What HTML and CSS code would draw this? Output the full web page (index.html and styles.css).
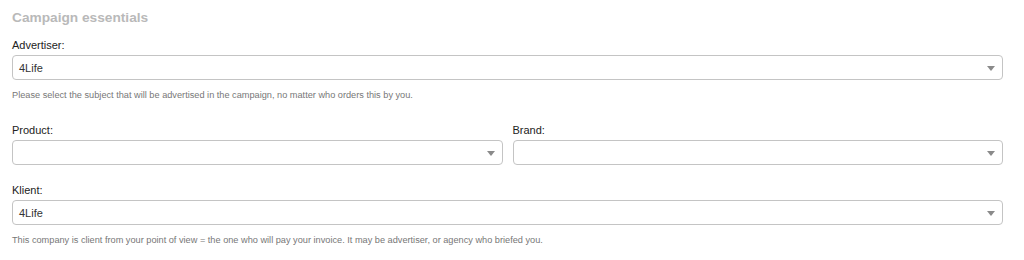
FILE: index.html
```html
<!DOCTYPE html>
<html>
<head>
<meta charset="utf-8">
<link rel="stylesheet" href="styles.css">
</head>
<body>
<div class="page">
  <h2 class="title">Campaign essentials</h2>
  <div class="field advertiser">
    <label class="label">Advertiser:</label>
    <div class="select"><span class="value">4Life</span><span class="arrow"></span></div>
    <p class="help">Please select the subject that will be advertised in the campaign, no matter who orders this by you.</p>
  </div>
  <div class="row">
    <div class="field">
      <label class="label">Product:</label>
      <div class="select"><span class="value"></span><span class="arrow"></span></div>
    </div>
    <div class="field">
      <label class="label">Brand:</label>
      <div class="select"><span class="value"></span><span class="arrow"></span></div>
    </div>
  </div>
  <div class="field klient">
    <label class="label">Klient:</label>
    <div class="select"><span class="value">4Life</span><span class="arrow"></span></div>
    <p class="help">This company is client from your point of view = the one who will pay your invoice. It may be advertiser, or agency who briefed you.</p>
  </div>
</div>
</body>
</html>
```
FILE: styles.css
```css
html, body {
  margin: 0;
  padding: 0;
  background: #fff;
}
body {
  font-family: "Liberation Sans", Arial, sans-serif;
  color: #222;
}
.page {
  padding: 10px 21px 0 12px;
}
.title {
  margin: 0;
  font-size: 13.7px;
  line-height: 16px;
  font-weight: bold;
  color: #b9b9b9;
}
.field {
  display: flex;
  flex-direction: column;
}
.advertiser {
  margin-top: 12px;
}
.label {
  font-size: 11px;
  line-height: 14px;
  margin-bottom: 3px;
  color: #222;
}
.select {
  height: 25px;
  box-sizing: border-box;
  border: 1px solid #c4c4c4;
  border-radius: 4px;
  display: flex;
  align-items: center;
  justify-content: space-between;
  padding: 0 7px 0 6px;
  background: #fff;
}
.value {
  font-size: 11px;
  color: #333;
}
.arrow {
  width: 0;
  height: 0;
  border-left: 4px solid transparent;
  border-right: 4px solid transparent;
  border-top: 5px solid #8a8a8a;
  margin-top: 1px;
}
.help {
  margin: 9px 0 0;
  font-size: 9.2px;
  line-height: 12px;
  color: #777;
}
.row {
  display: grid;
  grid-template-columns: 1fr 1fr;
  column-gap: 10px;
  margin-top: 22px;
}
.klient {
  margin-top: 18px;
}
```
